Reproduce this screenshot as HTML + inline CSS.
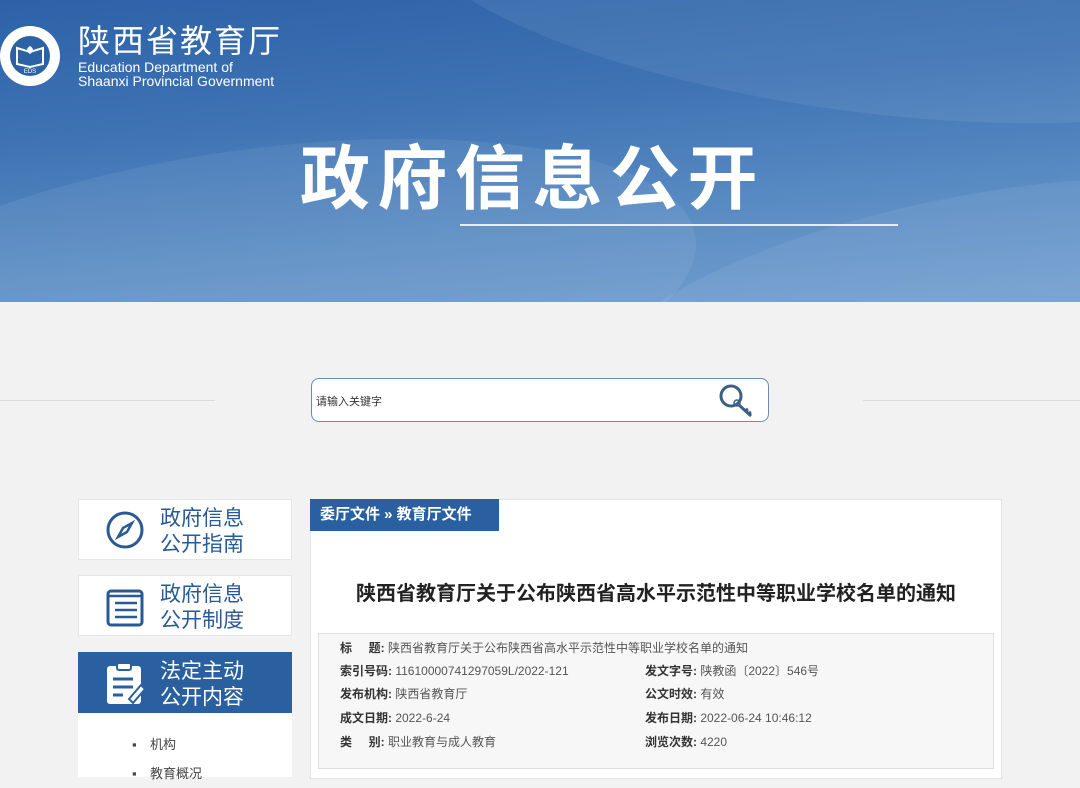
<!DOCTYPE html>
<html><head><meta charset="utf-8"><style>
*{margin:0;padding:0;box-sizing:border-box}
body{width:1080px;height:777px;overflow:hidden;background:#f2f2f2;font-family:"Liberation Sans","Noto Sans CJK SC",sans-serif;position:relative}
.banner{position:absolute;left:0;top:0;width:1080px;height:302px;background:linear-gradient(175deg,#2d62a8 0%,#3d72b3 35%,#5f90c6 75%,#739fcf 100%);overflow:hidden}
.wave{position:absolute;border-radius:50%;background:rgba(255,255,255,0.07)}
.abs{position:absolute}
.side{position:absolute;left:78px;width:214px;height:61px;background:#fff;border:1px solid #e6e6e6}
.side .t{position:absolute;left:81px;top:6px;font-size:21px;line-height:26px;color:#2a5a94}
.row{position:absolute;font-size:12px;color:#555;white-space:nowrap}
.row b{color:#333;font-weight:bold}
</style></head><body>
<div class="banner">
<div class="wave" style="left:-200px;top:150px;width:900px;height:300px;transform:rotate(-8deg)"></div>
<div class="wave" style="left:400px;top:-150px;width:900px;height:260px;transform:rotate(8deg)"></div>
<div class="wave" style="left:600px;top:200px;width:700px;height:200px;transform:rotate(-12deg)"></div>
<svg class="abs" style="left:0;top:24px" width="64" height="64" viewBox="0 0 64 64">
<circle cx="30" cy="32" r="30" fill="#fff"/><circle cx="30" cy="32" r="20" fill="#2b62a6"/>
<path d="M17 24 L30 28 L43 24 L43 40 L30 43 L17 40Z" fill="none" stroke="#fff" stroke-width="2"/>
<path d="M30 22 q-6 4 0 8 q6 -4 0 -8" fill="#fff"/>
<text x="30" y="49" font-size="6" fill="#fff" text-anchor="middle" font-family="Liberation Sans">EDS</text>
</svg>
<div class="abs" style="left:78px;top:21px;font-size:32px;color:#fff;letter-spacing:2px;line-height:40px">陕西省教育厅</div>
<div class="abs" style="left:78px;top:60px;font-size:14px;color:#fff;line-height:14px">Education Department of<br>Shaanxi Provincial Government</div>
<div class="abs" style="left:300px;top:134px;font-size:70px;font-weight:bold;color:#fff;letter-spacing:7.5px;line-height:90px">政府信息公开</div>
<div class="abs" style="left:460px;top:224px;width:438px;height:2px;background:#e8eef6"></div>
</div>
<div class="abs" style="left:0;top:400px;width:215px;height:1px;background:#dcdcdc"></div>
<div class="abs" style="left:863px;top:400px;width:217px;height:1px;background:#dcdcdc"></div>
<div class="abs" style="left:311px;top:378px;width:458px;height:44px;background:#fff;border:1px solid #6a8bb3;border-radius:8px"></div>
<div class="abs" style="left:316px;top:393px;font-size:11px;color:#333">请输入关键字</div>
<svg class="abs" style="left:718px;top:383px" width="38" height="36" viewBox="0 0 38 36"><circle cx="13" cy="13" r="10" fill="none" stroke="#3d5f86" stroke-width="3"/><circle cx="19" cy="20" r="3" fill="none" stroke="#3d5f86" stroke-width="1.5"/><path d="M21 22 L33 33 M27 28 l3 -2 M30 31 l3 -2" stroke="#3d5f86" stroke-width="3"/></svg>

<div class="side" style="top:499px"><svg class="abs" style="left:26px;top:10px" width="40" height="40" viewBox="0 0 40 40"><circle cx="20" cy="20" r="17" fill="none" stroke="#2a5a94" stroke-width="3"/><path d="M27 13 L22 22 L13 27 L18 18Z" fill="none" stroke="#2a5a94" stroke-width="2.5"/></svg><div class="t">政府信息<br>公开指南</div></div>
<div class="side" style="top:575px"><svg class="abs" style="left:26px;top:10px" width="40" height="42" viewBox="0 0 40 42"><rect x="3" y="5" width="34" height="34" rx="3" fill="none" stroke="#2a5a94" stroke-width="3"/><path d="M3 10 H37 M10 17 H32 M10 24 H32 M10 31 H32" stroke="#2a5a94" stroke-width="2.5"/></svg><div class="t">政府信息<br>公开制度</div></div>
<div class="side" style="top:652px;background:#2a5fa0;border-color:#2a5fa0"><svg class="abs" style="left:26px;top:8px" width="42" height="46" viewBox="0 0 42 46"><rect x="2" y="5" width="34" height="38" rx="3" fill="#fff"/><rect x="12" y="2" width="14" height="7" rx="2" fill="#fff" stroke="#2a5fa0" stroke-width="2"/><path d="M8 18 H28 M8 26 H28 M8 34 H18" stroke="#2a5fa0" stroke-width="3"/><path d="M24 38 L36 24 L40 28 L28 42Z" fill="#fff" stroke="#2a5fa0" stroke-width="2"/></svg><div class="t" style="color:#fff">法定主动<br>公开内容</div></div>
<div class="abs" style="left:78px;top:713px;width:214px;height:64px;background:#fff"></div>
<div class="abs" style="left:132px;top:730px;font-size:13px;color:#444;line-height:29px">▪<br>▪</div>
<div class="abs" style="left:150px;top:730px;font-size:13px;color:#444;line-height:29px">机构<br>教育概况</div>

<div class="abs" style="left:310px;top:499px;width:692px;height:280px;background:#fff;border:1px solid #e4e4e4"></div>
<div class="abs" style="left:310px;top:499px;width:189px;height:32px;background:#2a5fa0;color:#fff;font-size:15px;font-weight:bold;line-height:32px;padding-left:10px">委厅文件 » 教育厅文件</div>
<div class="abs" style="left:310px;top:577px;width:692px;text-align:center;font-size:20px;font-weight:bold;color:#222">陕西省教育厅关于公布陕西省高水平示范性中等职业学校名单的通知</div>
<div class="abs" style="left:318px;top:633px;width:676px;height:136px;background:#f7f7f7;border:1px solid #e0e0e0"></div>
<div class="row" style="left:340px;top:639px"><b>标&nbsp;&nbsp;&nbsp;&nbsp;&nbsp;题:</b> 陕西省教育厅关于公布陕西省高水平示范性中等职业学校名单的通知</div>
<div class="row" style="left:340px;top:662px"><b>索引号码:</b> 11610000741297059L/2022-121</div>
<div class="row" style="left:645px;top:662px"><b>发文字号:</b> 陕教函〔2022〕546号</div>
<div class="row" style="left:340px;top:685px"><b>发布机构:</b> 陕西省教育厅</div>
<div class="row" style="left:645px;top:685px"><b>公文时效:</b> 有效</div>
<div class="row" style="left:340px;top:709px"><b>成文日期:</b> 2022-6-24</div>
<div class="row" style="left:645px;top:709px"><b>发布日期:</b> 2022-06-24 10:46:12</div>
<div class="row" style="left:340px;top:733px"><b>类&nbsp;&nbsp;&nbsp;&nbsp;&nbsp;别:</b> 职业教育与成人教育</div>
<div class="row" style="left:645px;top:733px"><b>浏览次数:</b> 4220</div>
</body></html>
